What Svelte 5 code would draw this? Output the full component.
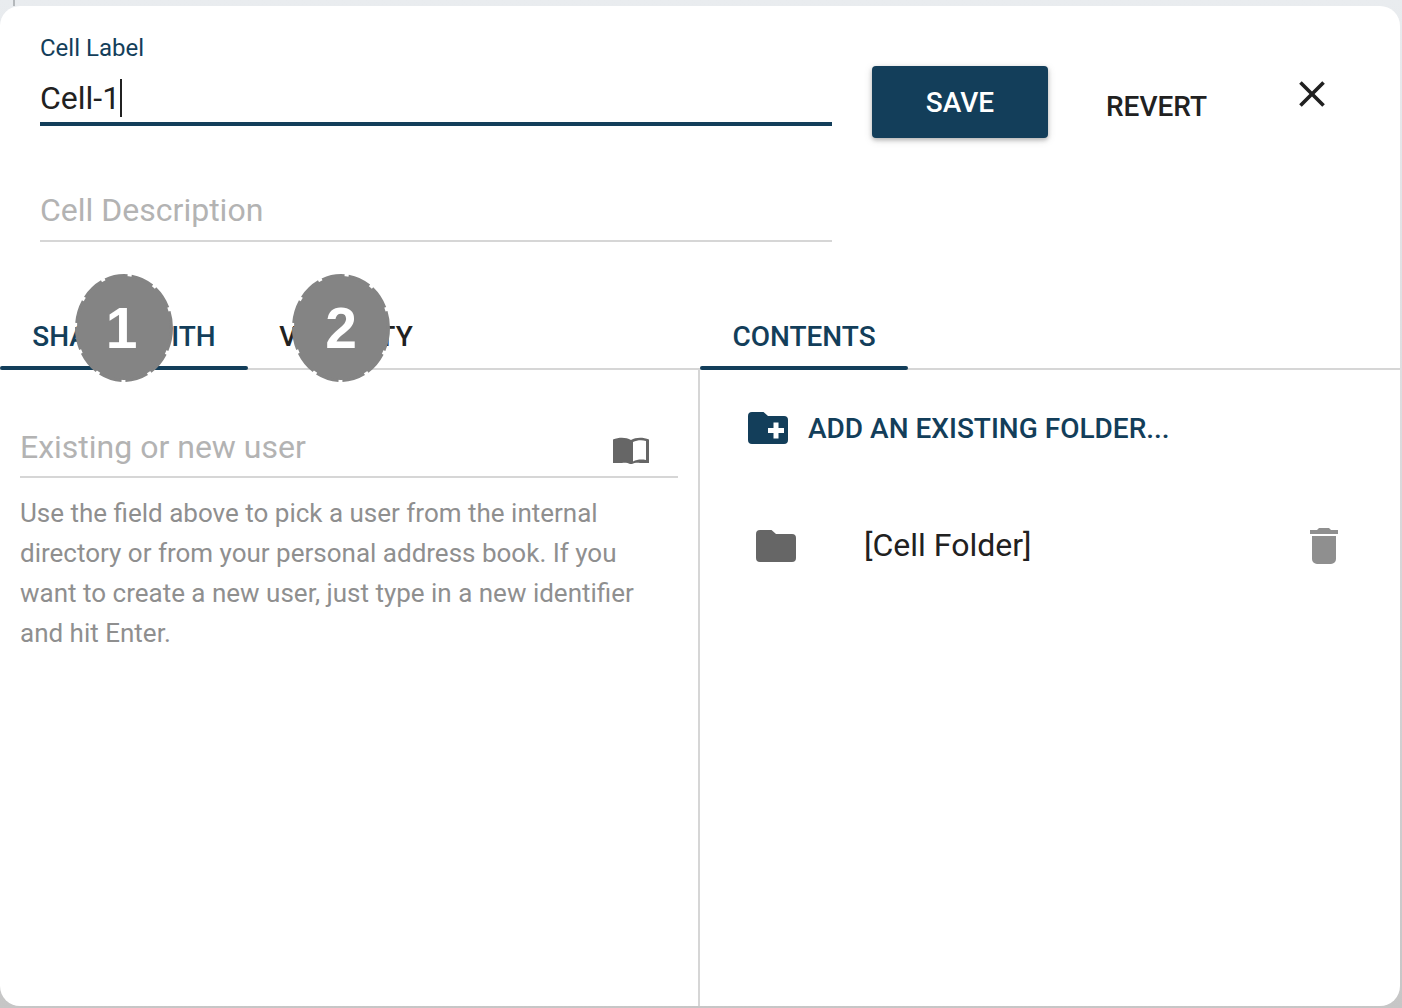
<script>
  const help = "Use the field above to pick a user from the internal directory or from your personal address book. If you want to create a new user, just type in a new identifier and hit Enter.";
</script>

{#snippet badge(n, cls)}
  <span class="badge {cls}">
    <svg viewBox="0 0 98 108" width="98" height="108">
      <ellipse cx="49" cy="54" rx="47" ry="52" fill="#848484" />
      <ellipse cx="49" cy="54" rx="47.500" ry="52.500" fill="none" stroke="#848484" stroke-width="3" stroke-dasharray="23 4" />
    </svg>
    <b>{n}</b>
  </span>
{/snippet}

<div class="page">
  <div class="dialog">
    <header class="head">
      <div class="fields">
        <div class="field active">
          <span class="float">Cell Label</span>
          <div class="value">Cell-1<i class="caret"></i></div>
        </div>
        <div class="field desc">
          <div class="value hint">Cell Description</div>
        </div>
      </div>
      <button class="save">SAVE</button>
      <button class="revert">REVERT</button>
      <button class="close" aria-label="Close">
        <svg viewBox="0 0 24 24" width="44" height="44"><path d="M19 6.410 17.590 5 12 10.590 6.410 5 5 6.410 10.590 12 5 17.590 6.410 19 12 13.410 17.590 19 19 17.590 13.410 12z" /></svg>
      </button>
    </header>

    <div class="panes">
      <section class="left">
        <div class="tabs">
          <div class="tab on t1">SHARED WITH{@render badge(1, "b1")}</div>
          <div class="tab t2">VISIBILITY{@render badge(2, "b2")}</div>
        </div>
        <div class="left-body">
          <div class="user-field">
            <span class="hint">Existing or new user</span>
            <svg class="book" viewBox="0 0 36 27" width="36" height="27">
              <path fill="#666" d="M0 2.500C6 0 13 0 18 3C23 0 30 0 36 2.500V26H27C24 25.500 21 26 19 27H17C15 26 12 25.500 9 26H0z" />
              <path fill="#fff" d="M20 5C24 3 29 2.500 33 4V23C28 22 24 22.500 20 24.500z" />
            </svg>
          </div>
          <p class="help">{help}</p>
        </div>
      </section>

      <section class="right">
        <div class="tabs">
          <div class="tab on t3">CONTENTS</div>
        </div>
        <div class="right-body">
          <div class="add">
            <svg viewBox="0 0 40 32" width="40" height="32"><path fill="#133e5a" d="M4 0h11.500l4.500 4h16a4 4 0 0 1 4 4v20a4 4 0 0 1-4 4H4a4 4 0 0 1-4-4V4a4 4 0 0 1 4-4z" /><path fill="#fff" d="M25.500 10.500h5V16H36v5h-5.500v5.500h-5V21H20v-5h5.500z" /></svg>
            <span>ADD AN EXISTING FOLDER...</span>
          </div>
          <div class="row">
            <svg viewBox="0 0 40 32" width="40" height="32"><path fill="#666" d="M4 0h11.500l4.500 4h16a4 4 0 0 1 4 4v20a4 4 0 0 1-4 4H4a4 4 0 0 1-4-4V4a4 4 0 0 1 4-4z" /></svg>
            <span class="name">[Cell Folder]</span>
            <svg class="trash" viewBox="0 0 28 36" width="28" height="36"><path fill="#8f8f8f" d="M9 0h10l2 2h7v4H0V2h7zM2 8h24v23a5 5 0 0 1-5 5H7a5 5 0 0 1-5-5z" /></svg>
          </div>
        </div>
      </section>
    </div>
  </div>
</div>

<style>
  :global(body) {
    margin: 0;
    background: #c9c9c9;
    font-family: Roboto, "Liberation Sans", sans-serif;
  }
  .page {
    width: 1402px;
    height: 1008px;
    box-sizing: border-box;
    padding: 6px 0 2px;
    background:
      linear-gradient(#b4b8bb, #b4b8bb) 13px 0 / 2px 6px no-repeat,
      linear-gradient(#e9ecef, #c6c6c6);
    overflow: hidden;
  }
  .dialog {
    width: 1400px;
    height: 1000px;
    background: #fff;
    border-radius: 20px;
    display: flex;
    flex-direction: column;
  }
  button { font-family: inherit; background: none; border: 0; padding: 0; }

  .head {
    height: 264px;
    flex: none;
    box-sizing: border-box;
    padding: 0 0 0 40px;
    display: flex;
    align-items: flex-start;
  }
  .fields { width: 792px; flex: none; }
  .field { border-bottom: 2px solid #d6d6d6; }
  .field.active {
    height: 120px;
    box-sizing: border-box;
    padding-top: 28px;
    border-bottom: 4px solid #133e5a;
  }
  .float { display: block; font-size: 24px; line-height: 28px; color: #133e5a; }
  .value { font-size: 32px; line-height: 44px; color: #212121; margin-top: 14px; height: 44px; display: flex; align-items: center; }
  .caret { display: block; width: 2px; height: 38px; background: #212121; }
  .field.desc { margin-top: 62px; height: 54px; box-sizing: border-box; }
  .hint { color: #b3b3b3; }
  .save {
    margin: 60px 0 0 40px;
    width: 176px;
    height: 72px;
    background: #133e5a;
    color: #fff;
    font-size: 28px;
    font-weight: 500;
    border-radius: 4px;
    box-shadow: 0 2px 4px rgba(0,0,0,.24), 0 2px 10px rgba(0,0,0,.12);
  }
  .revert {
    margin: 65px 0 0 58px;
    height: 70px;
    color: #212121;
    font-size: 28px;
    font-weight: 500;
  }
  .close { margin: 66px 0 0 83px; height: 44px; width: 44px; }
  .close svg { display: block; fill: #212121; }

  .panes { flex: 1; display: flex; min-height: 0; }
  .left { width: 700px; flex: none; display: flex; flex-direction: column; }
  .right { flex: 1; }
  .tabs {
    height: 100px;
    flex: none;
    box-sizing: border-box;
    border-bottom: 2px solid #d6d6d6;
    display: flex;
  }
  .tab {
    position: relative;
    height: 100px;
    box-sizing: border-box;
    padding-top: 50px;
    font-size: 28px;
    line-height: 34px;
    font-weight: 500;
    color: #212121;
    text-align: center;
    white-space: nowrap;
  }
  .tab.on { color: #133e5a; }
  .tab.on::after {
    content: "";
    position: absolute;
    left: 0;
    right: 0;
    bottom: 0;
    height: 4px;
    background: #133e5a;
    border-radius: 3px;
  }
  .t1 { width: 248px; }
  .t2 { width: 196px; }
  .t3 { width: 208px; }
  .badge {
    position: absolute;
    z-index: 1;
    width: 98px;
    height: 108px;
    top: 4px;
    display: flex;
    align-items: center;
    justify-content: center;
  }
  .badge svg { position: absolute; inset: 0; }
  .badge b {
    position: relative;
    color: #fff;
    font-family: "Liberation Sans", Arial, sans-serif;
    font-size: 57px;
    line-height: 1;
    font-weight: 700;
  }
  .b1 { left: 75px; padding-right: 5px; box-sizing: border-box; }
  .b2 { left: 44px; }

  .left-body { flex: 1; padding: 0 20px; border-right: 2px solid #d6d6d6; }
  .user-field {
    margin-top: 40px;
    height: 68px;
    box-sizing: border-box;
    border-bottom: 2px solid #d6d6d6;
    display: flex;
    justify-content: space-between;
    font-size: 32px;
    line-height: 74px;
  }
  .book { margin: 27px 29px 0 0; }
  .help {
    margin: 15px 0 0;
    width: 640px;
    font-size: 26px;
    line-height: 40px;
    color: #8f8f8f;
  }

  .right-body { padding: 42px 0 0 48px; }
  .add {
    display: flex;
    align-items: center;
    gap: 20px;
    color: #133e5a;
    font-size: 28px;
    font-weight: 500;
    height: 32px;
  }
  .row {
    margin: 84px 0 0 8px;
    display: flex;
    align-items: center;
    height: 36px;
    width: 582px;
  }
  .name { margin: 0 0 2px 68px; flex: 1; font-size: 32px; line-height: 34px; color: #212121; }
</style>
